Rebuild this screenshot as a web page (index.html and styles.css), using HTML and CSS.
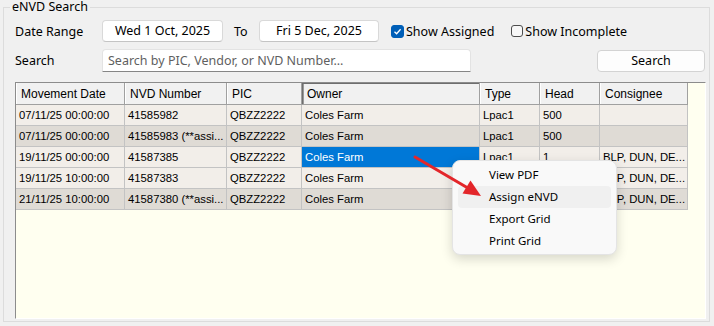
FILE: index.html
```html
<!DOCTYPE html>
<html lang="en">
<head>
    <meta charset="UTF-8">
    <meta name="viewport" content="width=device-width, initial-scale=1.0">
    <title>eNVD Search</title>
    <link rel="stylesheet" href="styles.css">
</head>
<body>

    <fieldset class="search-group">
        <legend class="group-title">eNVD Search</legend>

        <!-- Date range + filters -->
        <div class="filter-row">
            <span class="field-label">Date Range</span>
            <div class="date-box">Wed 1 Oct, 2025</div>
            <span class="to-label">To</span>
            <div class="date-box date-end">Fri 5 Dec, 2025</div>
            <label class="check-item">
                <span class="check-box checked">
                    <svg width="9" height="9" viewBox="0 0 9 9"><path d="M1.5 4.8 L3.6 6.8 L7.6 2.3" fill="none" stroke="#fff" stroke-width="1.3"/></svg>
                </span>
                Show Assigned
            </label>
            <label class="check-item check-second">
                <span class="check-box"></span>
                Show Incomplete
            </label>
        </div>

        <!-- Search -->
        <div class="filter-row search-row">
            <span class="field-label">Search</span>
            <input class="search-input" type="text" placeholder="Search by PIC, Vendor, or NVD Number...">
            <button class="search-btn">Search</button>
        </div>

        <!-- Results grid -->
        <div class="grid-box">
            <table class="result-grid">
                <colgroup>
                    <col style="width:109px">
                    <col style="width:102px">
                    <col style="width:75px">
                    <col style="width:178px">
                    <col style="width:60px">
                    <col style="width:60px">
                    <col style="width:88px">
                </colgroup>
                <thead>
                    <tr>
                        <th>Movement Date</th>
                        <th>NVD Number</th>
                        <th>PIC</th>
                        <th class="current-col">Owner</th>
                        <th>Type</th>
                        <th>Head</th>
                        <th>Consignee</th>
                    </tr>
                </thead>
                <tbody>
                    <tr class="row-light">
                        <td>07/11/25 00:00:00</td>
                        <td>41585982</td>
                        <td>QBZZ2222</td>
                        <td>Coles Farm</td>
                        <td>Lpac1</td>
                        <td>500</td>
                        <td></td>
                    </tr>
                    <tr class="row-dark">
                        <td>07/11/25 00:00:00</td>
                        <td>41585983 (**assi...</td>
                        <td>QBZZ2222</td>
                        <td>Coles Farm</td>
                        <td>Lpac1</td>
                        <td>500</td>
                        <td></td>
                    </tr>
                    <tr class="row-light">
                        <td>19/11/25 00:00:00</td>
                        <td>41587385</td>
                        <td>QBZZ2222</td>
                        <td class="selected">Coles Farm</td>
                        <td>Lpac1</td>
                        <td>1</td>
                        <td>BLP, DUN, DE...</td>
                    </tr>
                    <tr class="row-light">
                        <td>19/11/25 10:00:00</td>
                        <td>41587383</td>
                        <td>QBZZ2222</td>
                        <td>Coles Farm</td>
                        <td>Lpac1</td>
                        <td>1</td>
                        <td>BLP, DUN, DE...</td>
                    </tr>
                    <tr class="row-dark">
                        <td>21/11/25 10:00:00</td>
                        <td>41587380 (**assi...</td>
                        <td>QBZZ2222</td>
                        <td>Coles Farm</td>
                        <td>Lpac1</td>
                        <td>1</td>
                        <td>BLP, DUN, DE...</td>
                    </tr>
                </tbody>
            </table>
        </div>
    </fieldset>

    <!-- Right-click menu -->
    <div class="context-menu">
        <div class="menu-item">View PDF</div>
        <div class="menu-item hover">Assign eNVD</div>
        <div class="menu-item">Export Grid</div>
        <div class="menu-item">Print Grid</div>
    </div>

    <!-- Annotation arrow -->
    <svg class="pointer-arrow" width="714" height="326" viewBox="0 0 714 326">
        <line x1="415" y1="157" x2="467" y2="187.5" stroke="#e3262a" stroke-width="3" stroke-linecap="round"/>
        <polygon points="481,196 462.5,193.5 470.5,180.5" fill="#e3262a"/>
    </svg>

</body>
</html>
```

FILE: styles.css
```css
/* Basic styling */
body {
    margin: 0;
    width: 714px;
    height: 326px;
    overflow: hidden;
    position: relative;
    background-color: #f0f0f0;
    font-family: "Noto Sans", "Open Sans", sans-serif;
    font-size: 12.5px;
    color: #000;
}

.search-group {
    margin: 0 4px 0 3px;
    padding: 6px 3px 2px 11px;
    border: 1px solid #dcdcdc;
    min-width: 0;
}

.group-title {
    margin-left: -5px;
    padding: 0 2px;
    line-height: 14px;
}

/* Filter rows */
.filter-row {
    display: flex;
    align-items: center;
    height: 22px;
}

.field-label {
    width: 87px;
    flex-shrink: 0;
}

.date-box {
    box-sizing: border-box;
    width: 121px;
    height: 22px;
    line-height: 20px;
    text-align: center;
    background-color: #fff;
    border: 1px solid #d9d9d9;
    border-bottom-color: #c4c4c4;
    border-radius: 4px;
}

.date-end {
    width: 120px;
}

.to-label {
    width: 25px;
    padding-left: 11px;
}

.check-item {
    display: flex;
    align-items: center;
    gap: 2px;
    margin-left: 12px;
}

.check-second {
    margin-left: 17px;
}

.check-box {
    box-sizing: border-box;
    width: 12px;
    height: 12px;
    border: 1px solid #4d4d4d;
    border-radius: 3px;
    background-color: #f7f7f7;
    display: flex;
    align-items: center;
    justify-content: center;
}

.check-box.checked {
    width: 13px;
    height: 13px;
    border-color: #005fb8;
    background-color: #005fb8;
}

.search-row {
    margin-top: 7px;
    height: 23px;
}

.search-input {
    box-sizing: border-box;
    width: 369px;
    height: 23px;
    padding: 0 5px;
    background-color: #fff;
    border: 1px solid #e3e3e3;
    border-bottom-color: #868686;
    border-radius: 4px 4px 0 0;
    font-family: inherit;
    font-size: 12.5px;
    outline: none;
}

.search-input::placeholder {
    color: #5f5f5f;
}

.search-btn {
    box-sizing: border-box;
    margin-left: auto;
    margin-right: 1px;
    width: 108px;
    height: 22px;
    padding: 0;
    background-color: #fdfdfd;
    border: 1px solid #d3d3d3;
    border-radius: 4px;
    font-family: inherit;
    font-size: 12.5px;
    color: #000;
}

/* Results grid */
.grid-box {
    box-sizing: border-box;
    margin-top: 10px;
    height: 237px;
    background-color: #fffff0;
    border: 1px solid;
    border-color: #8c8c8c #ffffff #ffffff #8c8c8c;
}

.result-grid {
    table-layout: fixed;
    width: 672px;
    border-collapse: separate;
    border-spacing: 0;
    font-family: "Liberation Sans", Arial, sans-serif;
}

.result-grid th,
.result-grid td {
    overflow: hidden;
    white-space: nowrap;
    text-align: left;
    font-weight: normal;
}

.result-grid th {
    height: 21px;
    padding: 0 0 0 5px;
    font-size: 12px;
    background-color: #f1f1f1;
    border-right: 1px solid #a0a0a0;
    border-bottom: 1px solid #a0a0a0;
    box-shadow: inset 1px 0 0 #ffffff;
}

.result-grid th.current-col {
    box-shadow: inset 1px 1px 0 #6e6e6e, inset 2px 0 0 #9a9a9a;
}

.result-grid td {
    height: 20px;
    padding: 0 0 0 3px;
    font-size: 11.3px;
    border-right: 1px solid #c3c3c3;
    border-bottom: 1px solid #c3c3c3;
}

.row-light td {
    background-color: #f2eee9;
}

.row-dark td {
    background-color: #dfdbd5;
}

.result-grid td.selected {
    background-color: #0078d7;
    color: #fff;
}

/* Context menu */
.context-menu {
    position: absolute;
    left: 452px;
    top: 160px;
    box-sizing: border-box;
    width: 165px;
    padding: 3px 5px 2px 5px;
    background-color: #f9f9f9;
    border: 1px solid #e4e4e4;
    border-radius: 8px;
    box-shadow: 0 4px 12px rgba(0, 0, 0, 0.16);
    font-size: 11.5px;
}

.menu-item {
    height: 22px;
    line-height: 22px;
    padding-left: 31px;
    border-radius: 4px;
}

.menu-item.hover {
    background-color: #f0f0f0;
}

.pointer-arrow {
    position: absolute;
    left: 0;
    top: 0;
    pointer-events: none;
}
```
